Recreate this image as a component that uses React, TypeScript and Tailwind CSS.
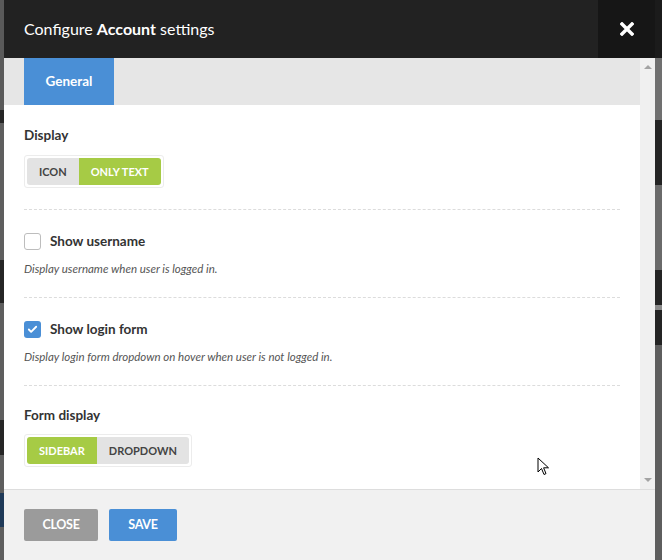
import { Check } from 'lucide-react';

const font = { fontFamily: 'Lato, "Open Sans", sans-serif' };

function SideStrip({ parts, className }: { parts: { h: string; c: string }[]; className: string }) {
  return (
    <div className={className}>
      {parts.map((p, i) => (
        <div key={i} className={`${p.h} ${p.c} shrink-0`} />
      ))}
      <div className="flex-1 bg-[#5e5e5e]" />
    </div>
  );
}

function ToggleGroup({ items, active }: { items: string[]; active: number }) {
  return (
    <div className="inline-flex rounded-[3px] border border-[#ececec] p-[2px]">
      {items.map((label, i) => (
        <button
          key={label}
          className={
            'h-[27px] px-[12px] text-[11px] font-bold uppercase leading-none ' +
            (i === active ? 'bg-[#a6cb45] text-white ' : 'bg-[#e3e3e3] text-[#444] ') +
            (i === 0 ? 'rounded-l-[3px] ' : '') +
            (i === items.length - 1 ? 'rounded-r-[3px]' : '')
          }
        >
          {label}
        </button>
      ))}
    </div>
  );
}

function CheckRow({ label, desc, checked }: { label: string; desc: string; checked: boolean }) {
  return (
    <div className="border-b border-dashed border-[#dcdcdc] pt-[22px] pb-[21px]">
      <div className="flex h-[18px] items-center gap-[9px]">
        {checked ? (
          <span className="flex size-[17px] items-center justify-center rounded-[3px] bg-[#4a8fd6]">
            <Check className="size-[11px] text-white" strokeWidth={4} />
          </span>
        ) : (
          <span className="size-[17px] rounded-[3px] border border-[#bdbdbd] bg-white" />
        )}
        <span className="text-[13.5px] font-bold text-[#333]">{label}</span>
      </div>
      <p className="mt-[12px] text-[11.5px] italic leading-[14px] text-[#555]">{desc}</p>
    </div>
  );
}

export default function App() {
  return (
    <div className="flex h-[560px] w-[662px] overflow-hidden bg-[#5e5e5e]" style={font}>
      <SideStrip
        className="flex w-[4px] shrink-0 flex-col"
        parts={[
          { h: 'h-[110px]', c: 'bg-[#5a5a5a]' },
          { h: 'h-[13px]', c: 'bg-[#262626]' },
          { h: 'h-[137px]', c: 'bg-[#5e5e5e]' },
          { h: 'h-[43px]', c: 'bg-[#252525]' },
          { h: 'h-[117px]', c: 'bg-[#5e5e5e]' },
          { h: 'h-[35px]', c: 'bg-[#262626]' },
          { h: 'h-[38px]', c: 'bg-[#5e5e5e]' },
          { h: 'h-[34px]', c: 'bg-[#1f3a58]' },
        ]}
      />

      <div className="relative flex w-[651px] shrink-0 flex-col">
        {/* Header */}
        <div className="flex h-[58px] shrink-0 bg-[#222]">
          <h1 className="flex flex-1 items-center pl-[20px] text-[16px] text-white">
            Configure&nbsp;<b>Account</b>&nbsp;settings
          </h1>
          <button className="flex w-[57px] items-center justify-center bg-[#161616]">
            <svg width="14" height="14" viewBox="0 0 14 14">
              <path d="M2 2L12 12M12 2L2 12" stroke="#fff" strokeWidth="3.4" strokeLinecap="square" />
            </svg>
          </button>
        </div>

        {/* Body */}
        <div className="flex min-h-0 flex-1">
          <div className="flex flex-1 flex-col">
            <div className="flex h-[47px] shrink-0 bg-[#e6e6e6] pl-[20px]">
              <div className="flex w-[90px] items-center justify-center bg-[#4a8fd6] text-[13.5px] font-bold text-white">
                General
              </div>
            </div>
            <div className="flex-1 bg-white px-[20px]">
              <div className="border-b border-dashed border-[#dcdcdc] pt-[21px] pb-[21px]">
                <div className="text-[13.5px] font-bold leading-[18px] text-[#333]">Display</div>
                <div className="mt-[11px]">
                  <ToggleGroup items={['Icon', 'Only text']} active={1} />
                </div>
              </div>
              <CheckRow label="Show username" desc="Display username when user is logged in." checked={false} />
              <CheckRow
                label="Show login form"
                desc="Display login form dropdown on hover when user is not logged in."
                checked
              />
              <div className="pt-[20px]">
                <div className="text-[13.5px] font-bold leading-[18px] text-[#333]">Form display</div>
                <div className="mt-[10px]">
                  <ToggleGroup items={['Sidebar', 'Dropdown']} active={0} />
                </div>
              </div>
            </div>
          </div>
          {/* Scrollbar */}
          <div className="flex w-[15px] shrink-0 flex-col items-center justify-between bg-[#f0f0f0] py-[7px]">
            <span className="h-0 w-0 border-x-[4px] border-b-[4px] border-x-transparent border-b-[#a3a3a3]" />
            <span className="h-0 w-0 border-x-[4px] border-t-[4px] border-x-transparent border-t-[#a3a3a3]" />
          </div>
        </div>

        {/* Footer */}
        <div className="flex h-[71px] shrink-0 items-center gap-[11px] border-t border-[#dddddd] bg-[#f1f1f1] px-[20px]">
          <button className="h-[32px] w-[74px] rounded-[2px] bg-[#9b9b9b] text-[12.5px] font-bold tracking-tight text-white">
            CLOSE
          </button>
          <button className="h-[32px] w-[68px] rounded-[2px] bg-[#4a8fd6] text-[12.5px] font-bold tracking-tight text-white">
            SAVE
          </button>
        </div>

        {/* Mouse cursor */}
        <svg className="absolute left-[533px] top-[457px]" width="13" height="19" viewBox="0 0 13 19">
          <path d="M1 1V15L4.5 11.5L7 17.5L9 16.6L6.6 10.8H11.5Z" fill="#fff" stroke="#000" strokeWidth="1" />
        </svg>
      </div>

      <SideStrip
        className="flex w-[7px] shrink-0 flex-col"
        parts={[
          { h: 'h-[58px]', c: 'bg-[#1b1b1b]' },
          { h: 'h-[62px]', c: 'bg-[#707070]' },
          { h: 'h-[65px]', c: 'bg-[#242424]' },
          { h: 'h-[85px]', c: 'bg-[#6a6a6a]' },
          { h: 'h-[35px]', c: 'bg-[#242424]' },
          { h: 'h-[5px]', c: 'bg-[#8a8a8a]' },
          { h: 'h-[35px]', c: 'bg-[#242424]' },
        ]}
      />
    </div>
  );
}
